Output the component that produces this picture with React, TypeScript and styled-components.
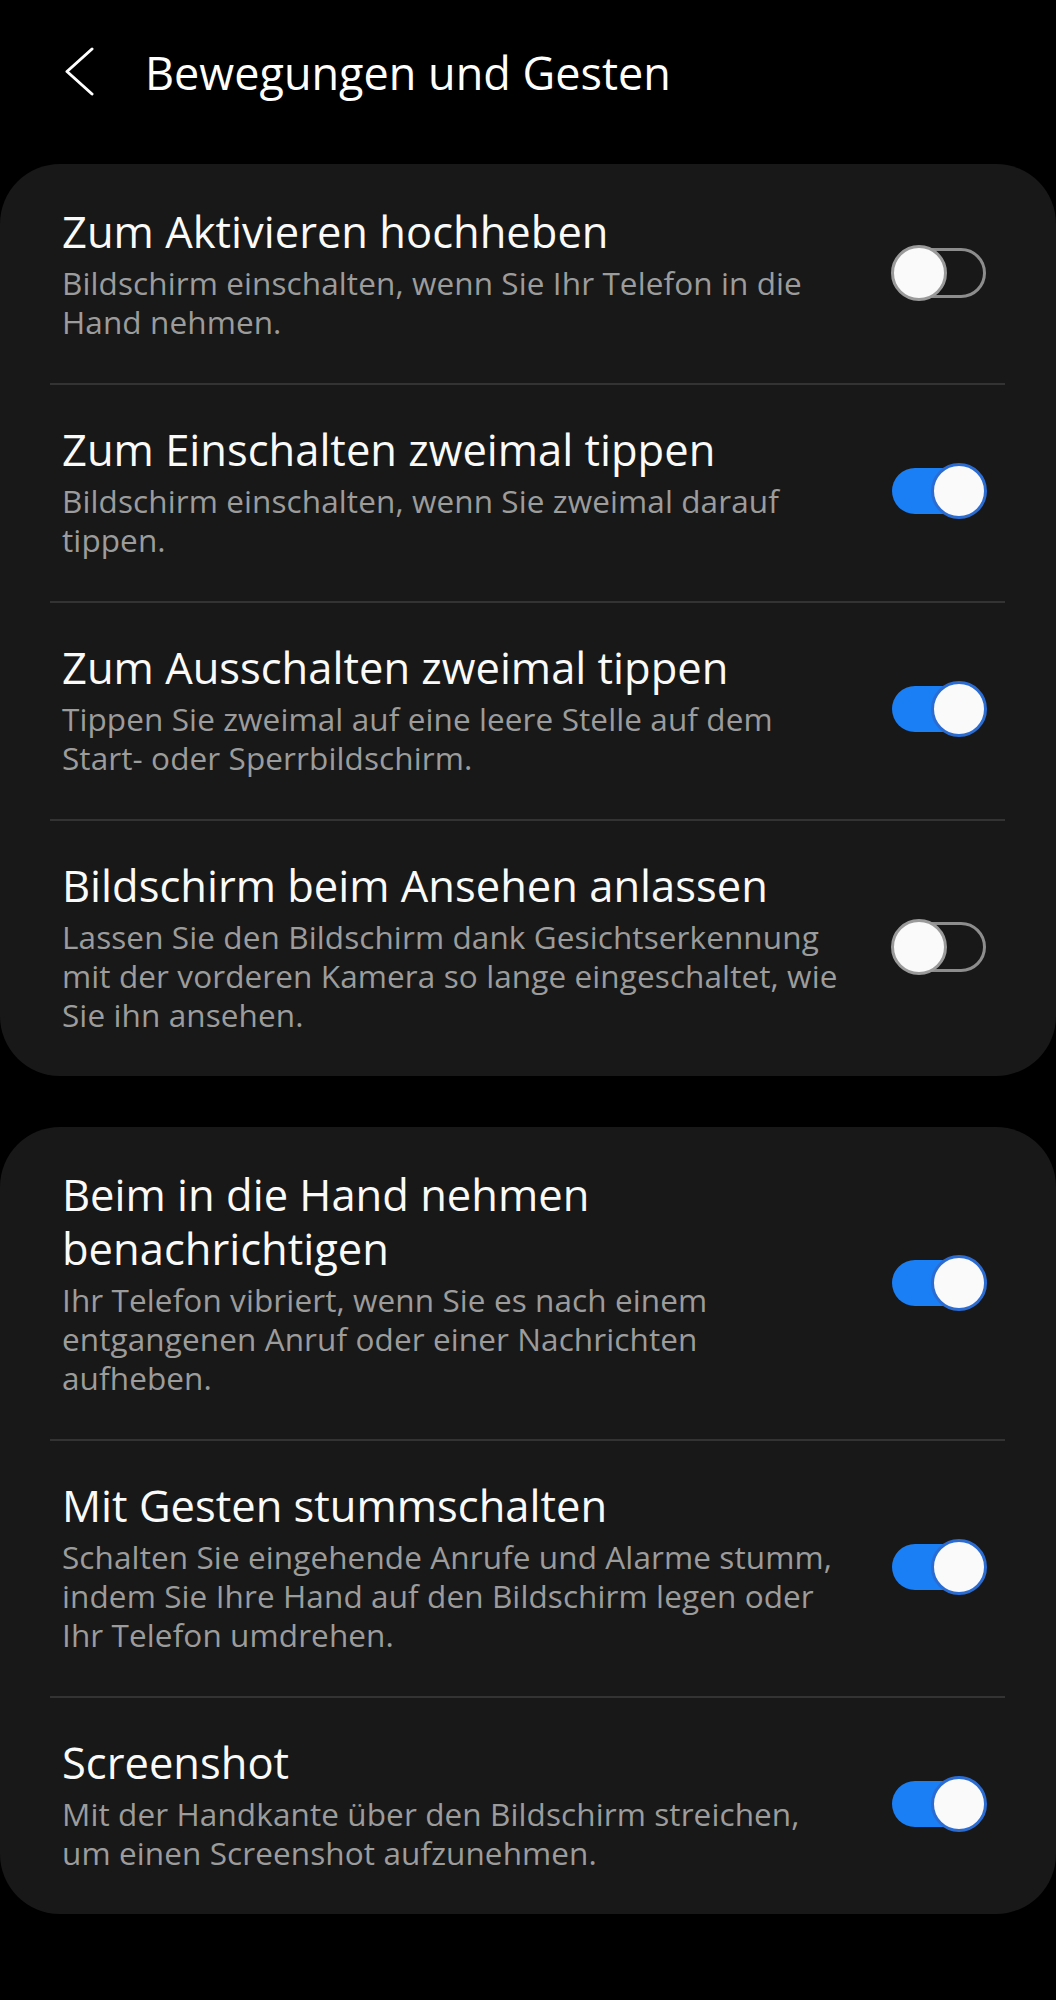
import React from "react";
import styled, { createGlobalStyle } from "styled-components";

const GlobalStyle = createGlobalStyle`
  html, body {
    margin: 0;
    padding: 0;
    background: #000000;
  }
  body {
    font-family: "Open Sans", "Noto Sans", Roboto, sans-serif;
    -webkit-font-smoothing: antialiased;
  }
  * { box-sizing: border-box; }
`;

const Page = styled.div`
  width: 1056px;
  min-height: 2000px;
  background: #000000;
  display: flex;
  flex-direction: column;
`;

const Header = styled.header`
  height: 146px;
  display: flex;
  align-items: center;
  padding-left: 64px;
  gap: 51px;
  margin-bottom: 18px;
`;

const BackButton = styled.button`
  width: 30px;
  height: 50px;
  padding: 0;
  margin: 0 0 4px 0;
  border: none;
  background: transparent;
  color: #ffffff;
  display: flex;
  cursor: pointer;
`;

const HeaderTitle = styled.h1`
  margin: 0;
  font-size: 45px;
  line-height: 54px;
  font-weight: 400;
  color: #ffffff;
  white-space: nowrap;
`;

const Cards = styled.div`
  display: flex;
  flex-direction: column;
  gap: 51px;
`;

const Card = styled.section`
  background: #181818;
  border-radius: 60px;
  padding: 3px 0 0;
  display: flex;
  flex-direction: column;
`;

const Row = styled.div`
  display: flex;
  align-items: center;
  padding: 38px 69px 42px 62px;
  gap: 24px;
`;

const TextCol = styled.div`
  flex: 1;
  display: flex;
  flex-direction: column;
  gap: 4px;
  min-width: 0;
`;

const Title = styled.div`
  font-size: 43.5px;
  line-height: 54px;
  color: #fafafa;
  font-weight: 400;
`;

const Subtitle = styled.div`
  font-size: 31.5px;
  line-height: 39px;
  letter-spacing: 0.1px;
  color: #9c9c9c;
  font-weight: 400;
`;

const Line = styled.span`
  display: block;
  white-space: nowrap;
`;

const Divider = styled.div`
  height: 2px;
  margin: 0 51px 0 50px;
  background: #333333;
`;

const SwitchRoot = styled.button<{ $on: boolean }>`
  position: relative;
  flex: none;
  width: 96px;
  height: 56px;
  padding: 0;
  border: none;
  background: transparent;
  cursor: pointer;
`;

const Track = styled.span<{ $on: boolean }>`
  position: absolute;
  left: 1px;
  right: 1px;
  top: ${(p) => (p.$on ? "5px" : "3px")};
  bottom: ${(p) => (p.$on ? "5px" : "3px")};
  border-radius: 26px;
  background: ${(p) => (p.$on ? "#1a7ef5" : "transparent")};
  border: ${(p) => (p.$on ? "none" : "3px solid #8d8d8d")};
`;

const Thumb = styled.span<{ $on: boolean }>`
  position: absolute;
  top: 0;
  ${(p) => (p.$on ? "right: 0;" : "left: 0;")}
  width: 56px;
  height: 56px;
  border-radius: 50%;
  background: #fafafa;
  border: 3px solid ${(p) => (p.$on ? "#2b6cd2" : "#9a9a9a")};
`;

function Switch({ on }: { on: boolean }) {
  return (
    <SwitchRoot $on={on} role="switch" aria-checked={on}>
      <Track $on={on} />
      <Thumb $on={on} />
    </SwitchRoot>
  );
}

type Item = { title: string[]; sub: string[]; on: boolean };

const group1: Item[] = [
  {
    title: ["Zum Aktivieren hochheben"],
    sub: ["Bildschirm einschalten, wenn Sie Ihr Telefon in die", "Hand nehmen."],
    on: false,
  },
  {
    title: ["Zum Einschalten zweimal tippen"],
    sub: ["Bildschirm einschalten, wenn Sie zweimal darauf", "tippen."],
    on: true,
  },
  {
    title: ["Zum Ausschalten zweimal tippen"],
    sub: ["Tippen Sie zweimal auf eine leere Stelle auf dem", "Start- oder Sperrbildschirm."],
    on: true,
  },
  {
    title: ["Bildschirm beim Ansehen anlassen"],
    sub: [
      "Lassen Sie den Bildschirm dank Gesichtserkennung",
      "mit der vorderen Kamera so lange eingeschaltet, wie",
      "Sie ihn ansehen.",
    ],
    on: false,
  },
];

const group2: Item[] = [
  {
    title: ["Beim in die Hand nehmen", "benachrichtigen"],
    sub: [
      "Ihr Telefon vibriert, wenn Sie es nach einem",
      "entgangenen Anruf oder einer Nachrichten",
      "aufheben.",
    ],
    on: true,
  },
  {
    title: ["Mit Gesten stummschalten"],
    sub: [
      "Schalten Sie eingehende Anrufe und Alarme stumm,",
      "indem Sie Ihre Hand auf den Bildschirm legen oder",
      "Ihr Telefon umdrehen.",
    ],
    on: true,
  },
  {
    title: ["Screenshot"],
    sub: ["Mit der Handkante über den Bildschirm streichen,", "um einen Screenshot aufzunehmen."],
    on: true,
  },
];

function SettingsCard({ items }: { items: Item[] }) {
  return (
    <Card>
      {items.map((it, i) => (
        <React.Fragment key={i}>
          {i > 0 && <Divider />}
          <Row>
            <TextCol>
              <Title>
                {it.title.map((l, j) => (
                  <Line key={j}>{l}</Line>
                ))}
              </Title>
              <Subtitle>
                {it.sub.map((l, j) => (
                  <Line key={j}>{l}</Line>
                ))}
              </Subtitle>
            </TextCol>
            <Switch on={it.on} />
          </Row>
        </React.Fragment>
      ))}
    </Card>
  );
}

export default function App() {
  return (
    <Page>
      <GlobalStyle />
      <Header>
        <BackButton aria-label="Zurück">
          <svg width="30" height="50" viewBox="0 0 30 50" fill="none">
            <polyline
              points="28,3 3,25.5 28,48"
              stroke="#ffffff"
              strokeWidth="3"
              strokeLinecap="round"
              strokeLinejoin="round"
            />
          </svg>
        </BackButton>
        <HeaderTitle>Bewegungen und Gesten</HeaderTitle>
      </Header>
      <Cards>
        <SettingsCard items={group1} />
        <SettingsCard items={group2} />
      </Cards>
    </Page>
  );
}
